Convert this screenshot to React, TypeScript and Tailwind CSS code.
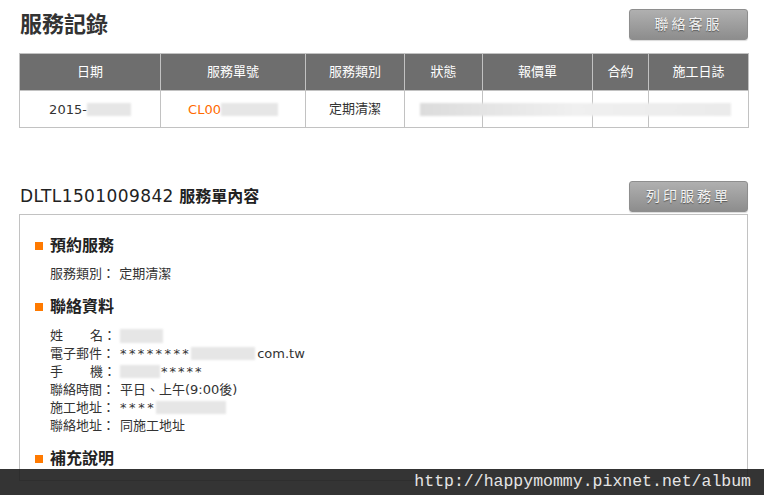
import React from 'react';

const cjk = "font-['DejaVu_Sans','Noto_Sans_CJK_TC',sans-serif]";

function GrayButton({ label }: { label: string }) {
  return (
    <button
      className={`${cjk} h-[31px] w-[119px] rounded-[3px] border border-[#8e8e8e] bg-gradient-to-b from-[#b0b0b0] to-[#8d8d8d] text-[14px] tracking-[3px] text-[#f4f4f4] [text-shadow:0_1px_1px_rgba(0,0,0,0.45)] shadow-[0_1px_1px_rgba(0,0,0,0.15)]`}
    >
      {label}
    </button>
  );
}

function Blur({ w, h = 'h-[13px]' }: { w: string; h?: string }) {
  return <span className={`inline-block align-middle ${w} ${h} bg-[#e6e6e6] blur-[1px]`} />;
}

const columns = [
  { name: '日期', w: 'w-[141px]' },
  { name: '服務單號', w: 'w-[145px]' },
  { name: '服務類別', w: 'w-[99px]' },
  { name: '狀態', w: 'w-[78px]' },
  { name: '報價單', w: 'w-[110px]' },
  { name: '合約', w: 'w-[56px]' },
  { name: '施工日誌', w: 'w-[100px]' },
];

function Section({ title, children }: { title: string; children?: React.ReactNode }) {
  return (
    <div>
      <div className="flex items-center gap-[7px]">
        <span className="h-[8px] w-[8px] bg-[#ff7a00]" />
        <h3 className="text-[16px] font-bold leading-[20px] text-[#222]">{title}</h3>
      </div>
      {children}
    </div>
  );
}

function Field({ label, children }: { label: React.ReactNode; children: React.ReactNode }) {
  return (
    <div className="flex h-[18px] items-center">
      <span className="w-[70px] shrink-0">{label}</span>
      <span className="flex items-center">{children}</span>
    </div>
  );
}

export default function App() {
  return (
    <div className={`${cjk} relative h-[495px] w-[764px] overflow-hidden bg-white text-[#333]`}>
      <div className="pl-[19px] pr-[16px] pt-[9px]">
        {/* 服務記錄 */}
        <div className="flex items-center justify-between">
          <h1 className="pl-[1px] text-[22px] font-bold leading-[31px] text-[#333]">服務記錄</h1>
          <GrayButton label="聯絡客服" />
        </div>

        <table className="mt-[13px] w-[729px] table-fixed border-collapse text-[13px]">
          <thead>
            <tr className="h-[37px] bg-[#6e6e6e] text-white">
              {columns.map((c) => (
                <th key={c.name} className={`${c.w} border border-[#c2c2c2] font-normal`}>
                  {c.name}
                </th>
              ))}
            </tr>
          </thead>
          <tbody>
            <tr className="h-[37px]">
              <td className="border border-[#c2c2c2] text-center">
                <span className="align-middle">2015-</span>
                <Blur w="w-[44px]" />
              </td>
              <td className="border border-[#c2c2c2] text-center">
                <span className="align-middle text-[#ff6a00]">CL00</span>
                <Blur w="w-[57px]" />
              </td>
              <td className="border border-[#c2c2c2] text-center">定期清潔</td>
              <td className="relative border border-[#c2c2c2]">
                <span className="absolute left-[15px] top-[12px] h-[13px] w-[311px] bg-gradient-to-r from-[#dcdcdc] via-[#f0f0f0] to-[#ebebeb] blur-[1px]" />
              </td>
              <td className="border border-[#c2c2c2]" />
              <td className="border border-[#c2c2c2]" />
              <td className="border border-[#c2c2c2]" />
            </tr>
          </tbody>
        </table>

        {/* 服務單內容 */}
        <div className="mt-[52px] flex items-center justify-between">
          <h2 className="pl-[1px] pt-[1px] text-[17px] leading-[31px] text-[#222]">
            <span className="tracking-[0.4px]">DLTL1501009842</span>{' '}
            <span className="text-[16px] font-bold">服務單內容</span>
          </h2>
          <GrayButton label="列印服務單" />
        </div>

        <div className="mt-[2px] h-[267px] w-[729px] border border-[#c2c2c2] pl-[15px] pt-[21px] text-[13px]">
          <Section title="預約服務">
            <div className="mt-[8px] pl-[15px]">服務類別： 定期清潔</div>
          </Section>
          <div className="mt-[13px]">
            <Section title="聯絡資料">
              <div className="mt-[10px] pl-[15px] leading-[18px]">
                <Field label={<span className="flex w-[66px] justify-between"><span>姓</span><span>名：</span></span>}>
                  <Blur w="w-[43px]" h="h-[14px]" />
                </Field>
                <Field label="電子郵件：">
                  <span className="tracking-[2.4px]">********</span>
                  <Blur w="w-[64px]" />
                  <span className="pl-[2px]">com.tw</span>
                </Field>
                <Field label={<span className="flex w-[66px] justify-between"><span>手</span><span>機：</span></span>}>
                  <Blur w="w-[40px]" />
                  <span className="pl-[1px] tracking-[2px]">*****</span>
                </Field>
                <Field label="聯絡時間：">平日、上午(9:00後)</Field>
                <Field label="施工地址：">
                  <span className="tracking-[2.6px]">****</span>
                  <Blur w="w-[70px]" />
                </Field>
                <Field label="聯絡地址：">同施工地址</Field>
              </div>
            </Section>
          </div>
          <div className="mt-[14px]">
            <Section title="補充說明" />
          </div>
        </div>
      </div>

      {/* watermark bar */}
      <div className="absolute bottom-0 left-0 flex h-[26px] w-full items-center justify-end bg-[#1e1e1e]/90 pr-[13px]">
        <span className="font-['Liberation_Mono',monospace] text-[16.5px] text-[#e4e4e4]">
          http://happymommy.pixnet.net/album
        </span>
      </div>
    </div>
  );
}
